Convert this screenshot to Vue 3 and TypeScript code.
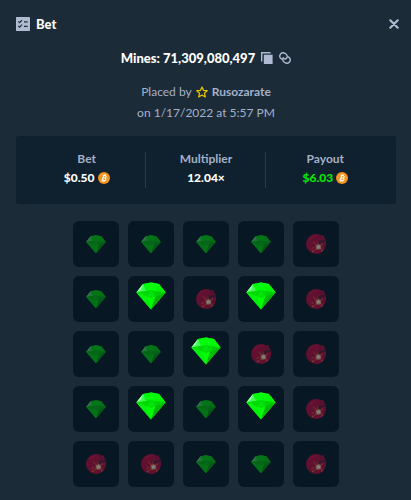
<script setup lang="ts">
type Kind = 'gem' | 'mine'

interface Tile {
  kind: Kind
  picked: boolean
}

const layout: string[] = ['ggggm', 'gGmGm', 'ggGmm', 'gGgGm', 'mmggm']

const tiles: Tile[] = layout
  .join('')
  .split('')
  .map((c) => ({ kind: c.toLowerCase() === 'g' ? 'gem' : 'mine', picked: c === 'G' }))

const stats = [
  { label: 'Bet', value: '$0.50', coin: true, win: false },
  { label: 'Multiplier', value: '12.04×', coin: false, win: false },
  { label: 'Payout', value: '$6.03', coin: true, win: true },
]
</script>

<template>
  <main class="modal">
    <header class="header">
      <svg class="list-icon" viewBox="0 0 14 14" aria-hidden="true">
        <rect width="14" height="14" rx="0.6" fill="#b1bad3" />
        <g fill="none" stroke="#1a2c38" stroke-width="1.2">
          <path d="M2.3 4.4 3.6 5.6 6 3.1M2.3 9 3.6 10.2 6 7.7" />
          <path d="M8 4.8H11.6M8 9.4H11.6" />
        </g>
      </svg>
      <h1>Bet</h1>
      <button class="close" type="button" aria-label="Close">
        <svg viewBox="0 0 10 10"><path d="M1.3 1.3 8.7 8.7M8.7 1.3 1.3 8.7" stroke="#b1bad3" stroke-width="2.1" stroke-linecap="round" /></svg>
      </button>
    </header>

    <section class="summary">
      <div class="title">
        <h2>Mines: 71,309,080,497</h2>
        <button type="button" aria-label="Copy bet ID">
          <svg viewBox="0 0 12 12" fill="#b1bad3"><path d="M0 0H9.6V1.5H1.4V9.6H0Z" /><path d="M2.8 2.7H11.6V12H2.8Z" /></svg>
        </button>
        <button type="button" aria-label="Copy link">
          <svg viewBox="0 0 12 12" fill="none" stroke="#b1bad3" stroke-width="1.4" stroke-linecap="round">
            <path d="M2.6 7C.6 6.2.3 3.9 1.3 2.3 2.3.6 4.4.3 5.9 1.3L6.9 2C8.5 3.2 8.6 5 7.5 6.2 6.7 7.1 5.4 7 4.4 6.2" />
            <path d="M9.4 5C11.4 5.8 11.7 8.1 10.7 9.7 9.7 11.4 7.6 11.7 6.1 10.7L5.1 10C3.5 8.8 3.4 7 4.4 5.8" />
          </svg>
        </button>
      </div>
      <div class="placed">
        <p>
          <span>Placed by</span>
          <svg class="star" viewBox="0 0 12 12" aria-hidden="true">
            <path d="M6 1 7.5 4.3 11.2 4.7 8.5 7.1 9.3 10.9 6 9 2.7 10.9 3.5 7.1.8 4.7 4.5 4.3Z" fill="none" stroke="#f0c800" stroke-width="1.2" stroke-linejoin="round" />
          </svg>
          <a href="#">Rusozarate</a>
        </p>
        <p>on 1/17/2022 at 5:57 PM</p>
      </div>
    </section>

    <dl class="stats">
      <div v-for="s in stats" :key="s.label" class="stat">
        <dt>{{ s.label }}</dt>
        <dd :class="{ win: s.win }">
          <span>{{ s.value }}</span>
          <svg v-if="s.coin" class="coin" viewBox="0 0 24 24" aria-hidden="true">
            <circle cx="12" cy="12" r="12" fill="#f7931a" />
            <g transform="rotate(14 12 12)" fill="none" stroke="#fff" stroke-width="2.2">
              <path d="M8 7.2H13.2C16.6 7.2 16.6 11.8 13.2 11.8H10M13.2 11.8C17.6 11.8 17.6 16.9 13.2 16.9H8M9.9 7.2V16.9" />
              <path d="M10.6 4.3V7M13.6 4.3V7M10.6 17V19.7M13.6 17V19.7" stroke-width="1.7" />
            </g>
          </svg>
        </dd>
      </div>
    </dl>

    <section class="board" aria-label="Mines board">
      <div v-for="(t, i) in tiles" :key="i" class="tile" :class="[t.kind, { picked: t.picked }]">
        <svg v-if="t.kind === 'gem'" viewBox="0 0 30 28">
          <path d="M7 2 15 .5 23 2 29.6 10.5 15 27.6.4 10.5Z" fill="#00e701" />
          <path d="M7 2 15 .5 23 2 19.5 9H10Z" fill="#00ff0a" />
          <path d="M7 2 10 9 .4 10.5Z" fill="#45fa58" />
          <path d="M7 2 5 7.5.4 10.5Z" fill="#9dffac" />
          <path d="M23 2 29.6 10.5 19.5 9Z" fill="#00f500" />
          <path d="M15 8 10 9 11 14.5 15 16 19.3 14.5 19.5 9Z" fill="#00d60a" />
          <path d="M15 8 11 14.5H19.3Z" fill="#00e50a" />
          <path d="M.4 10.5 10 9 11 14.5Z" fill="#00d900" />
          <path d="M29.6 10.5 19.5 9 19.3 14.5Z" fill="#00cf08" />
          <path d="M.4 10.5 11 14.5 15 27.6Z" fill="#00f20a" />
          <path d="M11 14.5 15 16 19.3 14.5 15 27.6Z" fill="#00ff00" />
          <path d="M29.6 10.5 19.3 14.5 15 27.6Z" fill="#00b806" />
        </svg>
        <svg v-else viewBox="0 0 20 20">
          <path d="M10 0C12 0 13.6.6 15 1.4L17.5 1.2 18.3 3.5 19.8 6.5C20.2 9 20.2 12 18.8 14.8 16.8 18.4 13.6 20 10 20A10 10 0 0 1 10 0Z" fill="#621030" />
          <path d="M4 3.5C7 1 10 1.4 11.5 2.3 8 2.2 5 4 2.7 7.2Z" fill="#6d1435" />
          <path d="M10.8 8.8 14.4 6.6 19.8 5.6 19.9 7.8 15.8 8.6 12.4 11Z" fill="#32182a" />
          <path d="M13.5 3.2 16.6 4.6M17.2 12 18.7 13.2" stroke="#36172b" stroke-width="1" />
          <path d="M7.2 7.5 10.5 11.3M15 14.5 17 17M10 15 6.4 18.2M8 13.5 5.5 14.5M12.3 10 11.6 7.8M15 11 17 9.5" stroke="#75452c" stroke-width=".8" />
          <circle cx="12.3" cy="13" r="2.9" fill="#704239" />
          <path d="M12.3 10.6 13.1 11.4 14.6 11.2 14.3 12.9 14.8 14.7 12.7 14.6 10.8 15.2 10.9 13.4 10 11.8 11.5 11.8Z" fill="#817d7c" />
          <path d="M6 16.7H7V17.6H6ZM15 16.7H16V17.6H15Z" fill="#936b2c" />
        </svg>
      </div>
    </section>
  </main>
</template>

<style>
body {
  margin: 0;
  background: #1b2c38;
}
</style>

<style scoped>
.modal {
  box-sizing: border-box;
  min-height: 100vh;
  padding: 16px 15px 12px 16px;
  background: #1b2c38;
  color: #a5b0c8;
  font: 12px/20px Lato, 'Liberation Sans', sans-serif;
}
h1,
h2,
p,
dl,
dd {
  margin: 0;
}
svg {
  display: block;
}
button {
  padding: 0;
  border: 0;
  background: none;
  cursor: pointer;
}
a {
  color: inherit;
  font-weight: 700;
  text-decoration: none;
}
.header {
  display: flex;
  align-items: center;
  gap: 6px;
  height: 16px;
}
.list-icon {
  width: 14px;
}
h1,
h2 {
  color: #fff;
  font-size: 13px;
  font-weight: 900;
}
.close {
  width: 10px;
  margin-left: auto;
  margin-right: -3px;
}
.summary {
  display: grid;
  gap: 14px;
  padding: 16px 0 13px;
}
.title,
.placed p {
  display: flex;
  align-items: center;
  justify-content: center;
}
.title {
  gap: 6px;
}
.title button {
  width: 12px;
}
.placed {
  display: grid;
  gap: 1px;
}
.placed p {
  gap: 4px;
}
.star {
  width: 12px;
}
.stats {
  display: flex;
  padding: 16px 11px;
  border-radius: 3px;
  background: #0f212e;
}
.stat {
  flex: 1;
  text-align: center;
  line-height: 14px;
  padding-bottom: 3px;
}
.stat + .stat {
  box-shadow: -1px 0 #2a3b48;
}
dt {
  font-weight: 700;
}
dd {
  display: flex;
  align-items: center;
  justify-content: center;
  gap: 3px;
  margin-top: 5px;
  color: #fff;
  font-weight: 900;
}
.win {
  color: #00e701;
}
.coin {
  width: 12px;
}
.board {
  display: grid;
  grid-template-columns: repeat(5, 46px);
  gap: 9px;
  justify-content: center;
  margin-top: 17px;
}
.tile {
  display: grid;
  place-items: center;
  height: 46px;
  border-radius: 6px;
  background: #071824;
}
.tile svg {
  width: 20px;
}
.gem:not(.picked) svg {
  opacity: 0.4;
}
.picked svg {
  width: 30px;
  margin-bottom: 6px;
}
</style>
